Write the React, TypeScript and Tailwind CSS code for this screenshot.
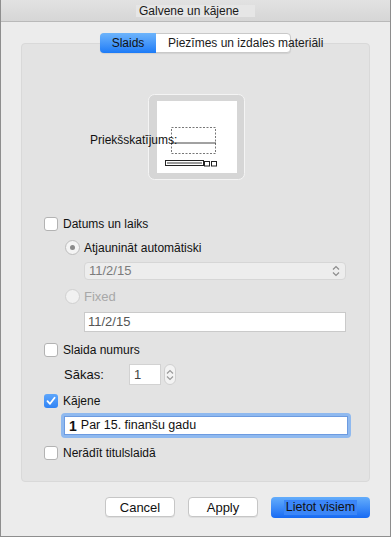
import React from "react";

function Checkbox({ checked = false }: { checked?: boolean }) {
  if (checked) {
    return (
      <span className="flex h-[14px] w-[14px] items-center justify-center rounded-[3px] bg-gradient-to-b from-[#5ea6fb] to-[#2f83f5]">
        <svg width="10" height="10" viewBox="0 0 10 10">
          <path d="M1.5 5.2 L4 7.8 L8.6 1.8" fill="none" stroke="white" strokeWidth="1.8" strokeLinecap="round" strokeLinejoin="round" />
        </svg>
      </span>
    );
  }
  return <span className="h-[14px] w-[14px] rounded-[3px] border border-[#b3b3b3] bg-white" />;
}

function Radio({ checked = false, disabled = false }: { checked?: boolean; disabled?: boolean }) {
  return (
    <span
      className={
        "flex h-[15px] w-[15px] items-center justify-center rounded-full border " +
        (disabled ? "border-[#d0d0d0] bg-[#f1f1f1]" : "border-[#bdbdbd] bg-[#f4f4f4]")
      }
    >
      {checked && <span className="h-[5px] w-[5px] rounded-full bg-[#8a8a8a]" />}
    </span>
  );
}

function Chevrons({ color = "#8c8c8c" }: { color?: string }) {
  return (
    <svg width="8" height="12" viewBox="0 0 8 12">
      <path d="M1 4.5 L4 1.5 L7 4.5" fill="none" stroke={color} strokeWidth="1.2" />
      <path d="M1 7.5 L4 10.5 L7 7.5" fill="none" stroke={color} strokeWidth="1.2" />
    </svg>
  );
}

function Preview() {
  return (
    <svg width="97" height="86" viewBox="0 0 97 86">
      <rect x="0.5" y="0.5" width="96" height="85" rx="6" fill="#d6d6d6" stroke="#f4f4f4" />
      <rect x="9" y="7" width="80" height="72" fill="#ffffff" />
      <rect x="23.5" y="33.5" width="44" height="26" fill="none" stroke="#777" strokeDasharray="2 1.5" />
      <line x1="23" y1="49" x2="68" y2="49" stroke="#444" />
      <rect x="17.5" y="66.5" width="38" height="5" fill="#fff" stroke="#222" />
      <rect x="19" y="68" width="35" height="2" fill="#9a9a9a" />
      <rect x="56.5" y="67.5" width="5" height="4.5" fill="#fff" stroke="#222" />
      <rect x="63.5" y="67.5" width="5" height="4.5" fill="#fff" stroke="#222" />
    </svg>
  );
}

export default function App() {
  return (
    <div
      className="flex h-[537px] w-[391px] flex-col border-x border-b border-[#8e8e8e] bg-[#ececec] text-[12px] text-[#111]"
      style={{ fontFamily: '"Liberation Sans", Arial, sans-serif' }}
    >
      <div className="flex h-[22px] shrink-0 items-center justify-center border-b border-[#b9b9b9] bg-gradient-to-b from-[#e2e2e2] to-[#d6d6d6]">
        <span className="bg-[#e6e6e6] pl-[3px] pr-[16px] leading-[12px] text-[#1a1a1a]">Galvene un kājene</span>
      </div>

      <div className="flex flex-1 flex-col px-[20px]">
        <div className="relative z-10 mt-[11px] flex h-[20px] justify-center">
          <div className="flex h-[20px] w-[191px] overflow-visible rounded-[4px] border border-[#c9c9c9] bg-white shadow-[0_1px_1px_rgba(0,0,0,0.08)]">
            <span className="-my-px -ml-px flex w-[56px] shrink-0 items-center justify-center rounded-l-[4px] bg-gradient-to-b from-[#6db4fb] to-[#1b7bf7] text-[#111]">
              Slaids
            </span>
            <span className="flex shrink-0 items-center whitespace-nowrap pl-[12px] text-[#1a1a1a]">Piezīmes un izdales materiāli</span>
          </div>
        </div>

        <div className="-mt-[10px] flex flex-col rounded-[4px] border border-[#d9d9d9] bg-[#e3e3e3] pb-[20px] pl-[22px] pr-[18px]">
          <div className="mt-[50px] flex h-[86px] items-center">
            <span className="relative z-10 ml-[46px] mt-[6px] w-[58px] whitespace-nowrap">Priekšskatījums:</span>
            <Preview />
          </div>

          <div className="mt-[35px] flex h-[17px] items-center gap-[5px]">
            <Checkbox />
            <span>Datums un laiks</span>
          </div>

          <div className="ml-[21px] mt-[7px] flex h-[17px] items-center gap-[4px]">
            <Radio checked />
            <span>Atjaunināt automātiski</span>
          </div>

          <div className="ml-[40px] mr-[5px] mt-[6px] flex h-[18px] items-center justify-between rounded-[4px] border border-[#d6d6d6] bg-[#ededed] pl-[4px] pr-[5px] text-[13px] text-[#7c7c7c]">
            <span>11/2/15</span>
            <Chevrons />
          </div>

          <div className="ml-[21px] mt-[8px] flex h-[17px] items-center gap-[4px] text-[#a8a8a8]">
            <Radio disabled />
            <span className="text-[13px]">Fixed</span>
          </div>

          <div className="ml-[40px] mr-[5px] mt-[7px] flex h-[20px] items-center border border-[#cacaca] bg-white pl-[3px] text-[13px] text-[#555]">
            11/2/15
          </div>

          <div className="mt-[9px] flex h-[17px] items-center gap-[5px]">
            <Checkbox />
            <span>Slaida numurs</span>
          </div>

          <div className="ml-[20px] mt-[6px] flex h-[21px] items-center">
            <span className="w-[65px] text-[13px]">Sākas:</span>
            <span className="flex h-[21px] w-[32px] items-center border border-[#d2d2d2] bg-white pl-[4px] text-[13px] text-[#444]">1</span>
            <span className="ml-[3px] flex h-[21px] w-[12px] items-center justify-center rounded-full border border-[#d0d0d0] bg-[#f3f3f3]">
              <Chevrons color="#9a9a9a" />
            </span>
          </div>

          <div className="mt-[7px] flex h-[17px] items-center gap-[5px]">
            <Checkbox checked />
            <span>Kājene</span>
          </div>

          <div className="ml-[17px] mt-[4px] flex h-[25px] items-center rounded-[4px] bg-[#8fb9ef] p-[3px]">
            <div className="flex h-full w-full items-center gap-[4px] border border-[#6d9be0] bg-white pl-[4px]">
              <span className="text-[14px] font-semibold leading-none">1</span>
              <span className="text-[12.5px]">Par 15. finanšu gadu</span>
            </div>
          </div>

          <div className="mt-[6px] flex h-[17px] items-center gap-[5px]">
            <Checkbox />
            <span>Nerādīt titulslaidā</span>
          </div>
        </div>

        <div className="mt-[15px] flex justify-end gap-[13px] text-[13px]">
          <button className="h-[20px] w-[70px] rounded-[4px] border border-[#c6c6c6] bg-white text-[#111] shadow-[0_1px_0_rgba(0,0,0,0.06)]">
            Cancel
          </button>
          <button className="h-[20px] w-[70px] rounded-[4px] border border-[#c6c6c6] bg-white text-[#111] shadow-[0_1px_0_rgba(0,0,0,0.06)]">
            Apply
          </button>
          <button className="flex h-[21px] w-[99px] items-center justify-center rounded-[4px] bg-gradient-to-b from-[#64adfb] to-[#1669f3] text-[#111]">
            <span className="bg-[#3b86f8] px-[2px] text-[12.5px] leading-[15px]">Lietot visiem</span>
          </button>
        </div>
      </div>
    </div>
  );
}
